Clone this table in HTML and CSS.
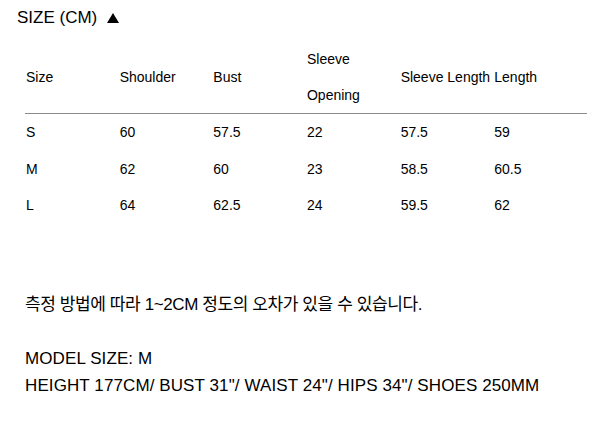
FILE: index.html
```html
<!DOCTYPE html>
<html lang="ko">
<head>
<meta charset="utf-8">
<title>Size</title>
<link rel="stylesheet" href="styles.css">
</head>
<body>
<div class="page">
  <h2 class="title">SIZE (CM)<svg class="tri" width="12" height="10" viewBox="0 0 12 10"><polygon points="6,0 12,10 0,10" fill="#000"/></svg></h2>
  <div class="body">
    <table class="size-table">
      <thead>
        <tr>
          <th>Size</th>
          <th>Shoulder</th>
          <th>Bust</th>
          <th>Sleeve Opening</th>
          <th>Sleeve Length</th>
          <th>Length</th>
        </tr>
      </thead>
      <tbody>
        <tr><td>S</td><td>60</td><td>57.5</td><td>22</td><td>57.5</td><td>59</td></tr>
        <tr><td>M</td><td>62</td><td>60</td><td>23</td><td>58.5</td><td>60.5</td></tr>
        <tr><td>L</td><td>64</td><td>62.5</td><td>24</td><td>59.5</td><td>62</td></tr>
      </tbody>
    </table>
    <p class="note">측정 방법에 따라 1~2CM 정도의 오차가 있을 수 있습니다.</p>
    <p class="model">MODEL SIZE: M<br>HEIGHT 177CM/ BUST 31"/ WAIST 24"/ HIPS 34"/ SHOES 250MM</p>
  </div>
</div>
</body>
</html>
```

FILE: styles.css
```css
html, body {
  margin: 0;
  padding: 0;
  background: #fff;
}
body {
  font-family: "Liberation Sans", Arial, "Noto Sans CJK KR", sans-serif;
  color: #000;
}
.page {
  padding: 4px 0 0 17px;
}
.title {
  margin: 0;
  font-size: 17px;
  font-weight: normal;
  line-height: 27px;
  display: flex;
  align-items: center;
}
.tri {
  margin-left: 10px;
}
.body {
  padding-left: 8px;
}
.size-table {
  margin-top: 10px;
  width: 562px;
  table-layout: fixed;
  border-collapse: collapse;
  font-size: 14px;
  line-height: 36px;
  color: #000;
}
.size-table th,
.size-table td {
  padding: 0 0 0 1px;
  text-align: left;
  font-weight: normal;
  vertical-align: middle;
}
.size-table thead tr {
  border-bottom: 1px solid #8a8a8a;
}
.size-table td {
  height: 36.5px;
}
.note {
  margin: 67px 0 0 0;
  font-size: 17px;
  line-height: 27px;
  letter-spacing: -0.4px;
}
.model {
  margin: 27px 0 0 0;
  font-size: 17px;
  line-height: 27px;
  letter-spacing: 0.1px;
}
```
